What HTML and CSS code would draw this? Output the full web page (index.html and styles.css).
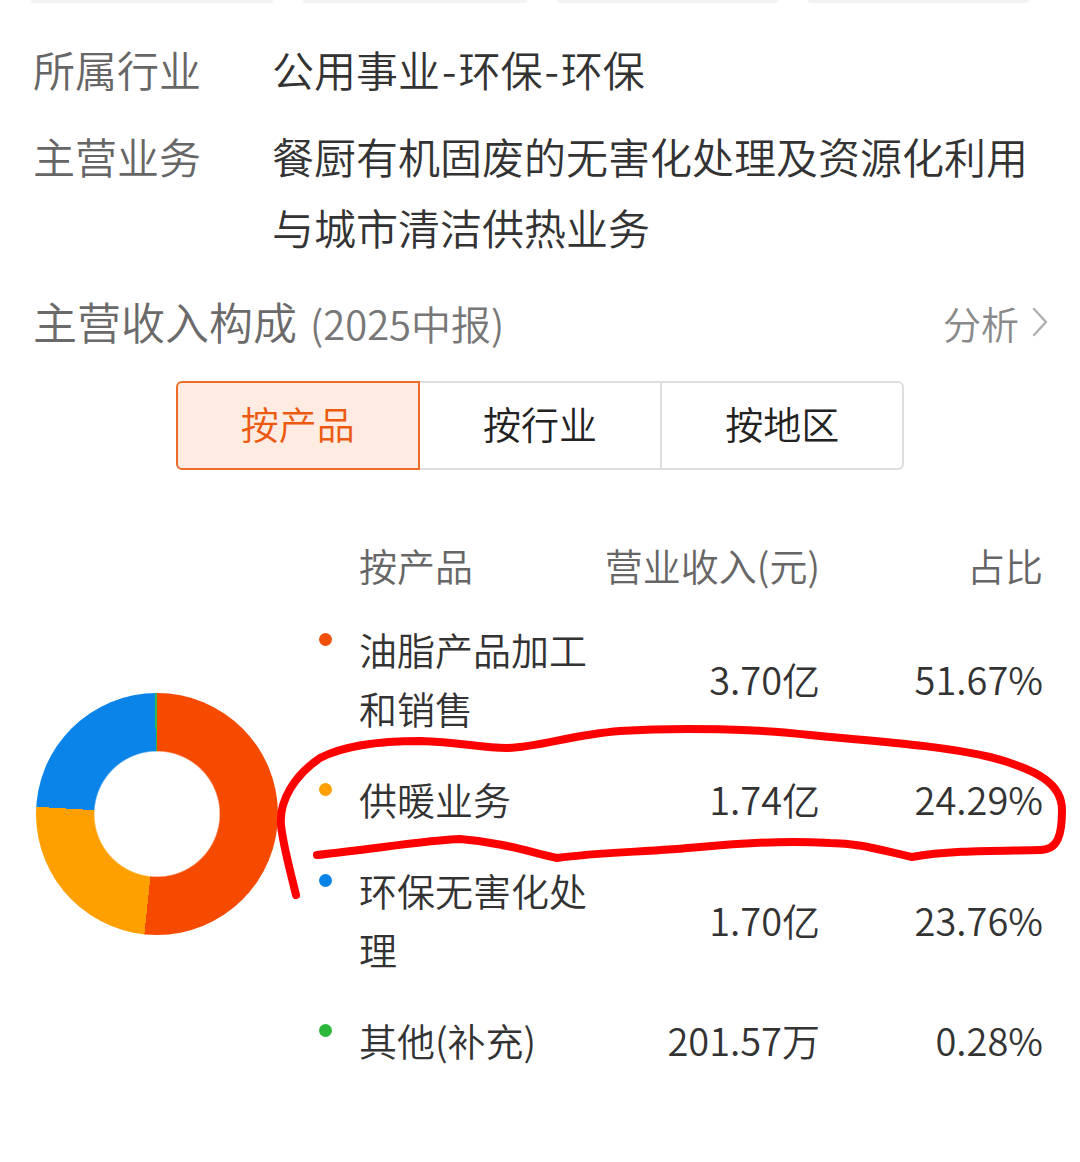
FILE: index.html
```html
<!DOCTYPE html>
<html lang="zh-CN">
<head>
<meta charset="utf-8">
<title>主营收入构成</title>
<link rel="stylesheet" href="styles.css">
</head>
<body>
<div class="page">
  <div class="top-tabs"><span></span><span></span><span></span><span></span></div>

  <div class="info">
    <div class="info-row">
      <div class="info-label">所属行业</div>
      <div class="info-value">公用事业<span class="dash">-</span>环保<span class="dash">-</span>环保</div>
    </div>
    <div class="info-row">
      <div class="info-label">主营业务</div>
      <div class="info-value">餐厨有机固废的无害化处理及资源化利用与城市清洁供热业务</div>
    </div>
  </div>

  <div class="section-head">
    <div class="section-title">主营收入构成<span class="section-sub">(2025中报)</span></div>
    <div class="section-link">分析<svg class="chev" width="16" height="30" viewBox="0 0 16 30"><polyline points="2,2 14,15 2,28" fill="none" stroke="#b0b0b0" stroke-width="2.4" stroke-linecap="round" stroke-linejoin="round"/></svg></div>
  </div>

  <div class="seg">
    <div class="seg-item active">按产品</div>
    <div class="seg-item">按行业</div>
    <div class="seg-item">按地区</div>
  </div>

  <div class="breakdown">
    <div class="donut-wrap"><div class="donut"></div></div>
    <div class="table">
      <div class="tr thead">
        <div class="c-name">按产品</div>
        <div class="c-num">营业收入(元)</div>
        <div class="c-num">占比</div>
      </div>
      <div class="tr row">
        <span class="dot dot-red"></span>
        <div class="c-name">油脂产品加工和销售</div>
        <div class="c-num">3.70亿</div>
        <div class="c-num">51.67%</div>
      </div>
      <div class="tr row">
        <span class="dot dot-orange"></span>
        <div class="c-name">供暖业务</div>
        <div class="c-num">1.74亿</div>
        <div class="c-num">24.29%</div>
      </div>
      <div class="tr row">
        <span class="dot dot-blue"></span>
        <div class="c-name">环保无害化处理</div>
        <div class="c-num">1.70亿</div>
        <div class="c-num">23.76%</div>
      </div>
      <div class="tr row">
        <span class="dot dot-green"></span>
        <div class="c-name">其他(补充)</div>
        <div class="c-num">201.57万</div>
        <div class="c-num">0.28%</div>
      </div>
    </div>
  </div>

  <svg class="annotation" width="1080" height="1162" viewBox="0 0 1080 1162">
    <path d="M296,895 C290,870 283,845 281,825 C279,800 295,775 320,758 C345,745 380,741 420,741 C460,742 480,748 507,748 C540,747 570,735 620,731 C680,727 760,729 810,735 C870,741 940,745 990,757 C1040,770 1062,785 1062,810 C1062,835 1058,850 1040,850 C1000,851 950,850 912,857 C880,850 860,843 830,843 C790,841 740,843 700,847 C650,852 600,852 557,858 C530,852 500,842 460,839 C430,840 380,848 317,855" fill="none" stroke="#ff0000" stroke-width="8" stroke-linecap="round" stroke-linejoin="round"/>
  </svg>
</div>
</body>
</html>
```

FILE: styles.css
```css
* { box-sizing: border-box; }

html, body {
  margin: 0;
  padding: 0;
  background: #ffffff;
}

body {
  font-family: "Noto Sans CJK SC", "Noto Sans", sans-serif;
  font-weight: 350;
  color: #333333;
}

.page {
  position: relative;
  width: 1080px;
  height: 1162px;
  overflow: hidden;
}

/* remnants of the cards above */
.top-tabs {
  display: flex;
  gap: 30px;
  padding-left: 31px;
  height: 4px;
}
.top-tabs span {
  height: 3px;
  background: #f2f2f4;
  border-radius: 0 0 6px 6px;
}
.top-tabs span:nth-child(1) { width: 242px; }
.top-tabs span:nth-child(2) { width: 224px; }
.top-tabs span:nth-child(3) { width: 221px; }
.top-tabs span:nth-child(4) { width: 221px; }

/* info rows */
.info {
  margin-top: 29px;
  padding: 0 33px;
  display: flex;
  flex-direction: column;
  gap: 16px;
}
.info-row {
  display: flex;
  font-size: 42px;
  line-height: 71px;
}
.info-label {
  width: 239px;
  flex: none;
  color: #666666;
}
.info-value {
  flex: 1;
  color: #333333;
}
.dash { margin: 0 2px; }

/* section heading */
.section-head {
  margin-top: 30px;
  height: 60px;
  padding: 0 32px 0 33px;
  display: flex;
  align-items: center;
  justify-content: space-between;
}
.section-title {
  font-size: 44px;
  line-height: 60px;
  color: #6a6a6a;
}
.section-sub {
  font-size: 40px;
  color: #777777;
  margin-left: 13px;
}
.section-link {
  display: flex;
  align-items: center;
  font-size: 38px;
  color: #8a8a8a;
}
.chev { margin-left: 13px; }

/* segmented control */
.seg {
  display: flex;
  width: 729px;
  height: 89px;
  margin: 29px auto 0;
}
.seg-item {
  flex: 1;
  display: flex;
  align-items: center;
  justify-content: center;
  padding-bottom: 6px;
  font-size: 38px;
  color: #222222;
  border: 2px solid #dedede;
  margin-left: -2px;
}
.seg-item:first-child {
  margin-left: 0;
  border-radius: 6px 0 0 6px;
}
.seg-item:last-child { border-radius: 0 6px 6px 0; }
.seg-item.active {
  position: relative;
  z-index: 1;
  border-color: #ec6d2a;
  background: #feece3;
  color: #ec5a10;
}

/* chart + table */
.breakdown {
  display: flex;
  align-items: center;
  margin-top: 65px;
}
.donut-wrap {
  width: 315px;
  flex: none;
  padding-left: 36px;
  padding-top: 8px;
}
.donut {
  width: 242px;
  height: 242px;
  border-radius: 50%;
  background:
    radial-gradient(circle at center, #ffffff 62px, rgba(255,255,255,0) 63.5px),
    conic-gradient(#f54a00 0 51.67%, #ffa000 0 75.96%, #0a84e8 0 99.72%, #2db84d 0);
}

.table {
  flex: 1;
  padding-right: 37px;
  font-size: 38px;
  line-height: 59px;
}
.tr {
  display: grid;
  grid-template-columns: 44px 245px 1fr 223px;
}
.thead {
  color: #666666;
  padding-bottom: 9px;
}
.thead .c-name { grid-column: 2; }
.row {
  padding: 16px 0;
  align-items: center;
  color: #333333;
}
.c-num { text-align: right; }
.dot {
  align-self: start;
  width: 13px;
  height: 13px;
  border-radius: 50%;
  margin: 14px 0 0 4px;
}
.dot-red { background: #f04f0c; }
.dot-orange { background: #ffa000; }
.dot-blue { background: #0a84e8; }
.dot-green { background: #2bb83a; }

/* hand-drawn highlight */
.annotation {
  position: absolute;
  left: 0;
  top: 0;
  pointer-events: none;
}
```
